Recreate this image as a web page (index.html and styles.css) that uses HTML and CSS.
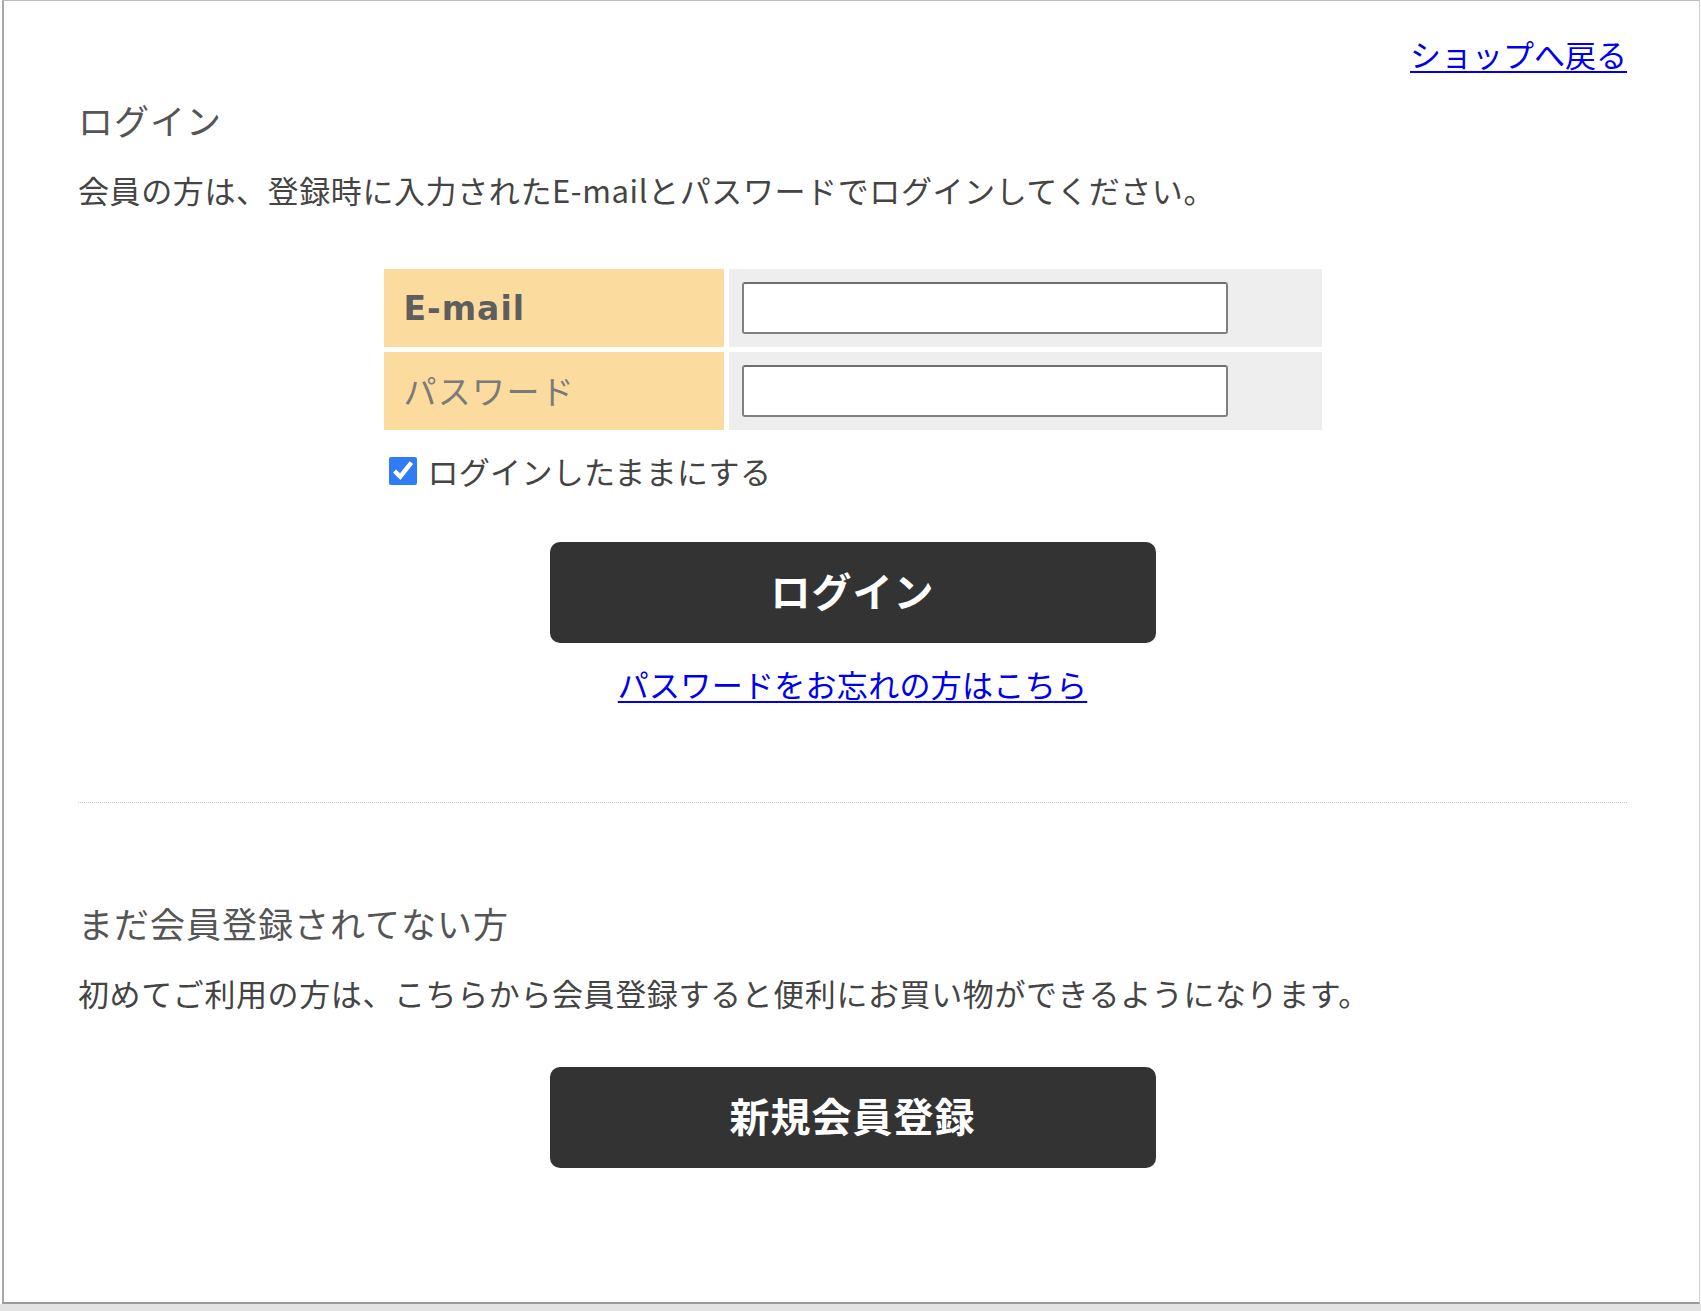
FILE: index.html
```html
<!DOCTYPE html>
<html lang="ja">
<head>
<meta charset="utf-8">
<title>ログイン</title>
<link rel="stylesheet" href="styles.css">
</head>
<body>
<div class="frame">
  <div class="toplink"><a href="#">ショップへ戻る</a></div>

  <section class="login">
    <h2 class="heading">ログイン</h2>
    <p class="lead">会員の方は、登録時に入力されたE-mailとパスワードでログインしてください。</p>

    <div class="form-table">
      <div class="label label-email">E-mail</div>
      <div class="field"><input type="text" class="input"></div>
      <div class="label label-pass">パスワード</div>
      <div class="field"><input type="password" class="input"></div>
    </div>

    <label class="keep">
      <input type="checkbox" class="check" checked>
      <span>ログインしたままにする</span>
    </label>

    <button class="btn btn-login" type="button">ログイン</button>

    <div class="forgot"><a href="#">パスワードをお忘れの方はこちら</a></div>
  </section>

  <hr class="divider">

  <section class="register">
    <h2 class="heading heading-reg">まだ会員登録されてない方</h2>
    <p class="lead lead-reg">初めてご利用の方は、こちらから会員登録すると便利にお買い物ができるようになります。</p>
    <button class="btn btn-register" type="button">新規会員登録</button>
  </section>
</div>
<div class="bottom-strip"></div>
</body>
</html>
```

FILE: styles.css
```css
html, body {
  margin: 0;
  padding: 0;
  background: #ffffff;
}

body {
  font-family: "Noto Sans CJK JP", "Noto Sans", sans-serif;
  color: #444;
}

.frame {
  box-sizing: border-box;
  margin-left: 2px;
  width: 1698px;
  height: 1304px;
  border-top: 1px solid #bdbdbd;
  border-left: 2px solid #a9a9a9;
  border-right: 1px solid #cfcfcf;
  border-bottom: 2px solid #9a9a9a;
  padding: 31px 72px 0 74px;
}

.bottom-strip {
  height: 7px;
  background: #e3e3e3;
}

a {
  color: #0000ee;
  text-decoration: underline;
  text-underline-offset: 4px;
  text-decoration-thickness: 2px;
}

.toplink {
  text-align: right;
  font-size: 31px;
  line-height: 43px;
}

.heading {
  margin: 20px 0 0;
  font-size: 35px;
  line-height: 49px;
  font-weight: 400;
  color: #555;
  letter-spacing: 1px;
}

.lead {
  margin: 24px 0 0;
  font-size: 31px;
  line-height: 43px;
  color: #444;
  letter-spacing: 0.6px;
}

.form-table {
  width: 938px;
  margin: 58px auto 0;
  display: grid;
  grid-template-columns: 340px 593px;
  grid-template-rows: 78px 78px;
  gap: 5px;
}

.label {
  background: #fcdc9e;
  display: flex;
  align-items: center;
  padding-left: 20px;
}

.label-email {
  font-family: "DejaVu Sans", sans-serif;
  font-weight: 700;
  font-size: 33px;
  letter-spacing: 1px;
  color: #5e5e5e;
}

.label-pass {
  font-size: 33px;
  letter-spacing: 1.3px;
  color: #7a7a7a;
  padding-bottom: 2px;
}

.field {
  background: #eeeeee;
  display: flex;
  align-items: center;
  padding-left: 13px;
}

.input {
  box-sizing: border-box;
  width: 486px;
  height: 52px;
  margin: 0;
  border: 2px solid #808080;
  border-top-color: #6e6e6e;
  border-radius: 3px;
  background: #fff;
  font-size: 24px;
}

.keep {
  width: 938px;
  margin: 19px auto 0;
  display: flex;
  align-items: center;
  gap: 11px;
  font-size: 31px;
  line-height: 43px;
  color: #444;
  letter-spacing: 0.3px;
  box-sizing: border-box;
  padding-left: 5px;
}

.check {
  width: 28px;
  height: 28px;
  margin: 0;
  accent-color: #2f7cf6;
}

.btn {
  display: block;
  width: 606px;
  height: 101px;
  margin: 50px auto 0;
  padding: 0 0 6px;
  border: 0;
  border-radius: 10px;
  background: #333333;
  color: #fff;
  font-family: "Noto Sans CJK JP", "Noto Sans", sans-serif;
  font-size: 40px;
  font-weight: 700;
  letter-spacing: 1px;
  cursor: pointer;
}

.forgot {
  margin-top: 19px;
  text-align: center;
  font-size: 31px;
  line-height: 43px;
  letter-spacing: 0.3px;
}

.divider {
  margin: 97px 0 0;
  border: 0;
  border-top: 1px dotted #c8c8c8;
  height: 0;
}

.heading-reg {
  margin-top: 95px;
}

.lead-reg {
  margin-top: 24px;
}

.btn-register {
  margin-top: 53px;
}
```
